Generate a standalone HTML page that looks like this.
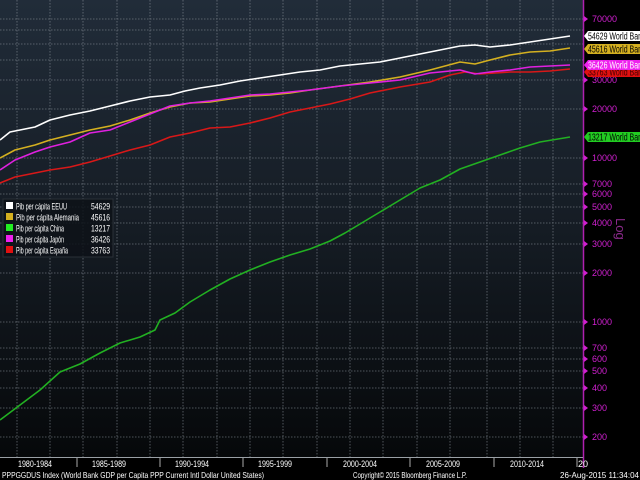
<!DOCTYPE html>
<html><head><meta charset="utf-8"><style>
html,body{margin:0;padding:0;background:#000;width:640px;height:480px;overflow:hidden}
svg{display:block}
text{font-family:"Liberation Sans Narrow","Liberation Sans",sans-serif}
</style></head><body>
<svg width="640" height="480" viewBox="0 0 640 480" xmlns="http://www.w3.org/2000/svg">
<defs>
<linearGradient id="bg" x1="0" y1="0" x2="0" y2="1">
<stop offset="0" stop-color="#212c39"/>
<stop offset="0.5" stop-color="#151c24"/>
<stop offset="1" stop-color="#06080a"/>
</linearGradient>
</defs>
<rect width="640" height="480" fill="#000"/>
<rect x="0" y="0" width="583" height="457" fill="url(#bg)"/>
<g stroke="#8a929b" stroke-width="0.8" stroke-dasharray="1.5,1.5" opacity="0.7">
<line x1="17" y1="0" x2="17" y2="457"/><line x1="50" y1="0" x2="50" y2="457"/><line x1="83" y1="0" x2="83" y2="457"/><line x1="117" y1="0" x2="117" y2="457"/><line x1="150" y1="0" x2="150" y2="457"/><line x1="183" y1="0" x2="183" y2="457"/><line x1="217" y1="0" x2="217" y2="457"/><line x1="250" y1="0" x2="250" y2="457"/><line x1="283" y1="0" x2="283" y2="457"/><line x1="317" y1="0" x2="317" y2="457"/><line x1="350" y1="0" x2="350" y2="457"/><line x1="383" y1="0" x2="383" y2="457"/><line x1="417" y1="0" x2="417" y2="457"/><line x1="450" y1="0" x2="450" y2="457"/><line x1="487" y1="0" x2="487" y2="457"/><line x1="520" y1="0" x2="520" y2="457"/><line x1="553" y1="0" x2="553" y2="457"/>
<line x1="0" y1="19" x2="583" y2="19"/><line x1="0" y1="30" x2="583" y2="30"/><line x1="0" y1="44" x2="583" y2="44"/><line x1="0" y1="60" x2="583" y2="60"/><line x1="0" y1="80" x2="583" y2="80"/><line x1="0" y1="109" x2="583" y2="109"/><line x1="0" y1="158" x2="583" y2="158"/><line x1="0" y1="184" x2="583" y2="184"/><line x1="0" y1="194" x2="583" y2="194"/><line x1="0" y1="207" x2="583" y2="207"/><line x1="0" y1="223" x2="583" y2="223"/><line x1="0" y1="244" x2="583" y2="244"/><line x1="0" y1="273" x2="583" y2="273"/><line x1="0" y1="322" x2="583" y2="322"/><line x1="0" y1="348" x2="583" y2="348"/><line x1="0" y1="359" x2="583" y2="359"/><line x1="0" y1="371" x2="583" y2="371"/><line x1="0" y1="388" x2="583" y2="388"/><line x1="0" y1="408" x2="583" y2="408"/><line x1="0" y1="437" x2="583" y2="437"/>
</g>
<g fill="none" stroke-width="1.6" stroke-linejoin="round">
<polyline stroke="#22b022" points="0,420 20,405 40,390 60,372 80,364 100,353 120,343 140,337 155,330 160,320 175,313 190,302 210,290 230,279 250,270 270,262 290,255 310,249 330,241 345,233 360,224 380,212 400,200 420,188 440,180 460,169 480,162 500,155 520,148 540,142 570,137"/>
<polyline stroke="#d81818" points="0,183 15,177 35,173 50,170 70,167 90,162 110,156 130,150 150,145 170,137 190,133 210,128 230,127 250,123 270,118 290,112 310,108 330,104 350,99 370,93 400,87 430,82 450,75 465,72 480,74 495,73 510,72 530,72 550,71 570,69"/>
<polyline stroke="#d4b020" points="0,158 15,150 35,145 50,140 70,135 90,130 110,126 130,120 150,113 170,107 190,103 210,102 230,99 250,96 270,95 290,93 310,90 340,86 370,82 400,77 430,70 460,62 475,64 490,60 510,55 530,52 550,51 570,48"/>
<polyline stroke="#e020e0" points="0,170 15,160 35,152 50,147 70,142 90,133 110,130 130,122 150,114 170,106 190,103 210,101 230,98 250,95 270,94 290,92 310,90 340,86 370,83 400,80 430,73 460,70 475,74 490,72 510,70 530,67 550,66 570,65"/>
<polyline stroke="#ffffff" points="0,140 10,132 20,130 35,127 50,120 70,115 90,111 110,106 130,101 150,97 170,95 185,91 200,88 220,85 240,81 260,78 280,75 300,72 320,70 340,66 360,64 380,62 400,58 420,54 440,50 460,46 475,45 490,47 510,45 530,42 550,39 570,36"/>
</g>
<line x1="583.5" y1="0" x2="583.5" y2="468" stroke="#b020b0" stroke-width="1.5"/>
<line x1="0" y1="457.5" x2="583" y2="457.5" stroke="#9aa0a6" stroke-width="1"/>
<g fill="#d020d0" font-size="9">
<text x="592" y="22">70000</text><text x="592" y="83">30000</text><text x="592" y="112">20000</text><text x="592" y="161">10000</text>
<text x="592" y="187">7000</text><text x="592" y="197">6000</text><text x="592" y="210">5000</text><text x="592" y="226">4000</text><text x="592" y="247">3000</text><text x="592" y="276">2000</text><text x="592" y="325">1000</text><text x="592" y="351">700</text><text x="592" y="362">600</text><text x="592" y="374">500</text><text x="592" y="391">400</text><text x="592" y="411">300</text><text x="592" y="440">200</text>
</g>
<g fill="#d020d0"><path d="M584,16v6l4,-3z"/><path d="M584,77v6l4,-3z"/><path d="M584,106v6l4,-3z"/><path d="M584,155v6l4,-3z"/><path d="M584,181v6l4,-3z"/><path d="M584,191v6l4,-3z"/><path d="M584,204v6l4,-3z"/><path d="M584,220v6l4,-3z"/><path d="M584,241v6l4,-3z"/><path d="M584,270v6l4,-3z"/><path d="M584,319v6l4,-3z"/><path d="M584,345v6l4,-3z"/><path d="M584,356v6l4,-3z"/><path d="M584,368v6l4,-3z"/><path d="M584,385v6l4,-3z"/><path d="M584,405v6l4,-3z"/><path d="M584,434v6l4,-3z"/></g>
<text x="0" y="0" transform="translate(616,218) rotate(90)" fill="#8a2a8a" font-size="13">Log</text>
<g font-size="10">
<path d="M584,36 l4,-5h52v10h-52z" fill="#fff"/><text x="588" y="39.5" fill="#000" textLength="54" lengthAdjust="spacingAndGlyphs">54629 World Ban</text>
<path d="M584,72 l4,-5h52v10h-52z" fill="#e01010"/><text x="588" y="75.5" fill="#400" textLength="54" lengthAdjust="spacingAndGlyphs">33763 World Ban</text>
<path d="M584,49 l4,-5h52v10h-52z" fill="#d4b020"/><text x="588" y="52.5" fill="#000" textLength="54" lengthAdjust="spacingAndGlyphs">45616 World Ban</text>
<path d="M584,65 l4,-5h52v10h-52z" fill="#ee20ee"/><text x="588" y="68.5" fill="#fff" textLength="54" lengthAdjust="spacingAndGlyphs">36426 World Ban</text>
<path d="M584,137 l4,-5h52v10h-52z" fill="#22cc22"/><text x="588" y="140.5" fill="#000" textLength="54" lengthAdjust="spacingAndGlyphs">13217 World Ban</text>
</g>
<rect x="3" y="199" width="110" height="58" fill="#0d1218" fill-opacity="0.85" stroke="#2a3038"/>
<g font-size="9.5" fill="#fff" lengthAdjust="spacingAndGlyphs">
<rect x="6" y="202" width="7" height="7" fill="#fff"/><text x="16" y="209.5" textLength="51" lengthAdjust="spacingAndGlyphs">Pib per cápita EEUU</text><text x="91" y="209.5" textLength="19" lengthAdjust="spacingAndGlyphs">54629</text>
<rect x="6" y="213" width="7" height="7" fill="#d4b020"/><text x="16" y="220.5" textLength="63" lengthAdjust="spacingAndGlyphs">Pib per cápita Alemania</text><text x="91" y="220.5" textLength="19" lengthAdjust="spacingAndGlyphs">45616</text>
<rect x="6" y="224" width="7" height="7" fill="#22ee22"/><text x="16" y="231.5" textLength="48" lengthAdjust="spacingAndGlyphs">Pib per cápita China</text><text x="91" y="231.5" textLength="19" lengthAdjust="spacingAndGlyphs">13217</text>
<rect x="6" y="235" width="7" height="7" fill="#ee20ee"/><text x="16" y="242.5" textLength="48" lengthAdjust="spacingAndGlyphs">Pib per cápita Japón</text><text x="91" y="242.5" textLength="19" lengthAdjust="spacingAndGlyphs">36426</text>
<rect x="6" y="246" width="7" height="7" fill="#e01010"/><text x="16" y="253.5" textLength="52" lengthAdjust="spacingAndGlyphs">Pib per cápita España</text><text x="91" y="253.5" textLength="19" lengthAdjust="spacingAndGlyphs">33763</text>
</g>
<g stroke="#aaa" stroke-width="1"><line x1="77" y1="458" x2="77" y2="467"/><line x1="160" y1="458" x2="160" y2="467"/><line x1="243" y1="458" x2="243" y2="467"/><line x1="327" y1="458" x2="327" y2="467"/><line x1="410" y1="458" x2="410" y2="467"/><line x1="494" y1="458" x2="494" y2="467"/><line x1="577" y1="458" x2="577" y2="467"/></g>
<g fill="#fff" font-size="9">
<text x="18" y="467" textLength="34" lengthAdjust="spacingAndGlyphs">1980-1984</text><text x="92" y="467" textLength="34" lengthAdjust="spacingAndGlyphs">1985-1989</text><text x="175" y="467" textLength="34" lengthAdjust="spacingAndGlyphs">1990-1994</text><text x="258" y="467" textLength="34" lengthAdjust="spacingAndGlyphs">1995-1999</text><text x="343" y="467" textLength="34" lengthAdjust="spacingAndGlyphs">2000-2004</text><text x="426" y="467" textLength="34" lengthAdjust="spacingAndGlyphs">2005-2009</text><text x="510" y="467" textLength="34" lengthAdjust="spacingAndGlyphs">2010-2014</text><text x="578" y="467">20</text>
</g>
<g fill="#fff" font-size="8.5">
<text x="2" y="478" textLength="262" lengthAdjust="spacingAndGlyphs">PPPGGDUS Index (World Bank GDP per Capita PPP Current Intl Dollar United States)</text>
<text x="353" y="478" textLength="114" lengthAdjust="spacingAndGlyphs">Copyright© 2015 Bloomberg Finance L.P.</text>
<text x="560" y="478" textLength="79" lengthAdjust="spacingAndGlyphs">26-Aug-2015 11:34:04</text>
</g>
</svg>
</body></html>
